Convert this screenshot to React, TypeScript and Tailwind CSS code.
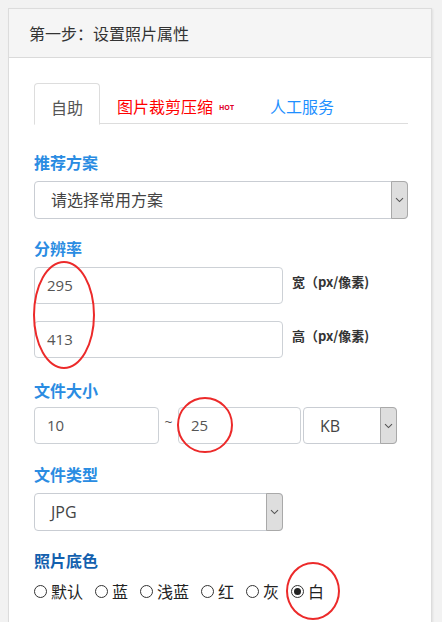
import React from "react";

const cjk = { fontFamily: '"Noto Sans CJK SC", "Noto Sans", sans-serif' };
const num = { fontFamily: '"Open Sans", "Noto Sans CJK SC", sans-serif' };

function Chevron() {
  return (
    <svg width="9" height="6" viewBox="0 0 9 6" fill="none">
      <path d="M1 1.2 L4.5 4.6 L8 1.2" stroke="#555" strokeWidth="1.1" />
    </svg>
  );
}

function Select({ text, w, h = 38 }: { text: string; w: number; h?: number }) {
  return (
    <div
      className="flex border border-[#c9cdd3] rounded-[4px] bg-white"
      style={{ width: w, height: h }}
    >
      <div className="flex-1 flex items-center pl-[16px] text-[16px] text-[#444]" style={num}>
        {text}
      </div>
      <div className="w-[17px] -my-px -mr-px flex items-center justify-center bg-[#dedede] border border-[#a9a9a9] rounded-r-[4px]">
        <Chevron />
      </div>
    </div>
  );
}

function Input({ value, w }: { value: string; w: number }) {
  return (
    <div
      className="h-[37px] flex items-center pl-[12px] border border-[#cdd1d6] rounded-[4px] bg-white text-[15px] text-[#555]"
      style={{ width: w, ...num }}
    >
      {value}
    </div>
  );
}

function Label({ children, dark }: { children: React.ReactNode; dark?: boolean }) {
  return (
    <div
      className={`h-5 leading-5 text-[16px] font-bold ${dark ? "text-[#1360ae]" : "text-[#2a8ce2]"}`}
      style={cjk}
    >
      {children}
    </div>
  );
}

function Radio({ label, checked }: { label: string; checked?: boolean }) {
  return (
    <div className="flex items-center gap-[4px] mr-[12px]">
      <span className="w-[13px] h-[13px] rounded-full border border-[#333] flex items-center justify-center">
        {checked && <span className="w-[7px] h-[7px] rounded-full bg-[#222]" />}
      </span>
      <span className="text-[16px] text-[#222]" style={cjk}>
        {label}
      </span>
    </div>
  );
}

export default function App() {
  return (
    <div className="relative w-[442px] h-[622px] overflow-hidden bg-[#f2f2f2]" style={cjk}>
      <div className="ml-2 mt-2 w-[424px] h-[640px] bg-white border border-[#dcdcdc] shadow-[1px_1px_2px_rgba(0,0,0,0.08)]">
        <div className="h-[49px] bg-[#f5f5f5] border-b border-[#dadada] flex items-center pl-[20px] text-[16px] text-[#333]">
          第一步：设置照片属性
        </div>
        <div className="pl-[25px] pr-[23px] pt-[25px] flex flex-col">
          {/* tabs */}
          <div className="flex h-[41px] border-b border-[#dddddd]">
            <div className="w-[66px] h-[42px] border border-[#dddddd] border-b-white rounded-t-[4px] bg-white flex items-center justify-center pt-[5px] text-[16px] text-[#555]">
              自助
            </div>
            <div className="ml-[17px] flex items-center pt-[5px] text-[16px] text-[#ff0000]">
              图片裁剪压缩
              <span className="ml-[6px] mt-[4px] text-[7px] font-bold text-[#e0002a] leading-none" style={num}>
                HOT
              </span>
            </div>
            <div className="ml-[36px] flex items-center pt-[5px] text-[16px] text-[#1e8fff]">
              人工服务
            </div>
          </div>

          <div className="mt-[28px]">
            <Label>推荐方案</Label>
          </div>
          <div className="mt-[9px]">
            <Select text="请选择常用方案" w={374} />
          </div>

          <div className="mt-[19px]">
            <Label>分辨率</Label>
          </div>
          <div className="mt-[9px] flex items-center">
            <Input value="295" w={249} />
            <span className="ml-[9px] -mt-[7px] text-[13px] font-bold text-[#333]" style={cjk}>
              宽（px/像素)
            </span>
          </div>
          <div className="mt-[17px] flex items-center">
            <Input value="413" w={249} />
            <span className="ml-[9px] -mt-[7px] text-[13px] font-bold text-[#333]" style={cjk}>
              高（px/像素)
            </span>
          </div>

          <div className="mt-[22px]">
            <Label>文件大小</Label>
          </div>
          <div className="mt-[7px] flex items-start">
            <Input value="10" w={125} />
            <span className="w-[19px] text-center text-[14px] text-[#555] leading-none mt-[8px]" style={num}>
              ~
            </span>
            <Input value="25" w={123} />
            <div className="ml-[2px]">
              <Select text="KB" w={94} h={37} />
            </div>
          </div>

          <div className="mt-[20px]">
            <Label>文件类型</Label>
          </div>
          <div className="mt-[9px]">
            <Select text="JPG" w={249} />
          </div>

          <div className="mt-[19px]">
            <Label dark>照片底色</Label>
          </div>
          <div className="mt-[11px] h-5 flex items-center">
            <Radio label="默认" />
            <Radio label="蓝" />
            <Radio label="浅蓝" />
            <Radio label="红" />
            <Radio label="灰" />
            <Radio label="白" checked />
          </div>
        </div>
      </div>

      {/* red annotation marks */}
      <div className="absolute left-[33px] top-[261px] w-[62px] h-[108px] rounded-[50%] border-[2.5px] border-[#ec2a2a]" />
      <div className="absolute left-[177px] top-[397px] w-[56px] h-[56px] rounded-full border-[2.5px] border-[#ec2a2a]" />
      <div className="absolute left-[286px] top-[562px] w-[54px] h-[58px] rounded-[50%] border-[2.5px] border-[#ec2a2a]" />
    </div>
  );
}
